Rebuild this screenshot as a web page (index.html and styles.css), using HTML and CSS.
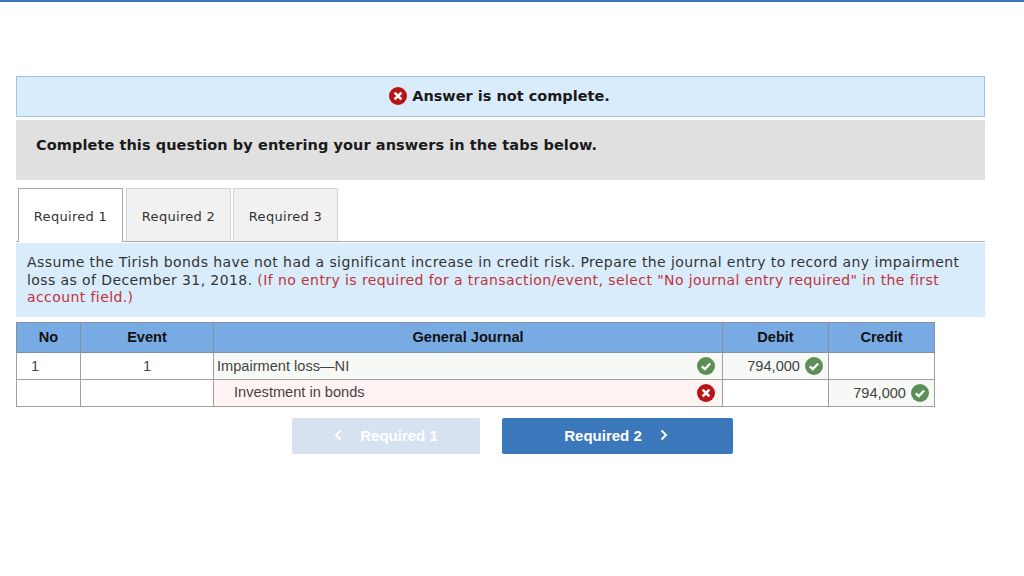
FILE: index.html
```html
<!DOCTYPE html>
<html lang="en">
<head>
    <meta charset="UTF-8">
    <title>Answer is not complete</title>
    <link rel="stylesheet" href="styles.css">
</head>
<body>

<div class="topbar"></div>

<div class="wrap">
    <div class="alert">
        <svg class="icon icon-big" viewBox="0 0 18 18"><circle cx="9" cy="9" r="9" fill="#b81414"/><path d="M5.6 5.6l6.8 6.8M12.4 5.6l-6.8 6.8" stroke="#fff" stroke-width="2.6" fill="none"/></svg>
        <span>Answer is not complete.</span>
    </div>

    <div class="prompt">Complete this question by entering your answers in the tabs below.</div>

    <!--tabs-->
    <div class="tabs">
        <span class="tab current">Required 1</span>
        <span class="tab">Required 2</span>
        <span class="tab">Required 3</span>
    </div>

    <div class="question">
        Assume the Tirish bonds have not had a significant increase in credit risk. Prepare the journal entry to record any impairment loss as of December 31, 2018. <span class="red">(If no entry is required for a transaction/event, select "No journal entry required" in the first account field.)</span>
    </div>

    <table class="journal">
        <thead>
            <tr>
                <th class="c-no">No</th>
                <th class="c-event">Event</th>
                <th class="c-account">General Journal</th>
                <th class="c-debit">Debit</th>
                <th class="c-credit">Credit</th>
            </tr>
        </thead>
        <tbody>
            <tr>
                <td class="num">1</td>
                <td class="num">1</td>
                <td class="good">
                    <div class="cell"><span>Impairment loss—NI</span>
                        <svg class="icon" viewBox="0 0 18 18"><circle cx="9" cy="9" r="9" fill="#5b8f56"/><path d="M4.8 9.3l3 2.8 5.4-5.6" stroke="#fff" stroke-width="2.3" fill="none"/></svg>
                    </div>
                </td>
                <td class="good">
                    <div class="cell cell-money"><span>794,000</span>
                        <svg class="icon" viewBox="0 0 18 18"><circle cx="9" cy="9" r="9" fill="#5b8f56"/><path d="M4.8 9.3l3 2.8 5.4-5.6" stroke="#fff" stroke-width="2.3" fill="none"/></svg>
                    </div>
                </td>
                <td></td>
            </tr>
            <tr>
                <td></td>
                <td></td>
                <td class="bad">
                    <div class="cell"><span class="indent">Investment in bonds</span>
                        <svg class="icon" viewBox="0 0 18 18"><circle cx="9" cy="9" r="9" fill="#b81414"/><path d="M5.6 5.6l6.8 6.8M12.4 5.6l-6.8 6.8" stroke="#fff" stroke-width="2.6" fill="none"/></svg>
                    </div>
                </td>
                <td></td>
                <td class="good">
                    <div class="cell cell-money"><span>794,000</span>
                        <svg class="icon" viewBox="0 0 18 18"><circle cx="9" cy="9" r="9" fill="#5b8f56"/><path d="M4.8 9.3l3 2.8 5.4-5.6" stroke="#fff" stroke-width="2.3" fill="none"/></svg>
                    </div>
                </td>
            </tr>
        </tbody>
    </table>

    <div class="nav">
        <div class="btn btn-prev">
            <svg class="chev" viewBox="0 0 8 12"><path d="M6.5 1.5L2 6l4.5 4.5" stroke="#fff" stroke-width="2" fill="none"/></svg>
            <span>Required 1</span>
        </div>
        <div class="btn btn-next">
            <span>Required 2</span>
            <svg class="chev" viewBox="0 0 8 12"><path d="M1.5 1.5L6 6l-4.5 4.5" stroke="#fff" stroke-width="2" fill="none"/></svg>
        </div>
    </div>
</div>

</body>
</html>
```

FILE: styles.css
```css
* {
    margin: 0;
    padding: 0;
    box-sizing: border-box;
}

body {
    background-color: #fff;
    font-family: "DejaVu Sans", Verdana, sans-serif;
    color: #333;
}

.topbar {
    height: 2px;
    background-color: #3b78bb;
}

.wrap {
    width: 969px;
    margin: 74px 0 0 16px;
}

.icon {
    display: block;
    width: 18px;
    height: 18px;
    flex: none;
}

.alert {
    height: 41px;
    display: flex;
    align-items: center;
    justify-content: center;
    gap: 5px;
    background-color: #d9ecfb;
    border: 1px solid #9cc5ea;
    padding: 0 2px 2px 0;
    font-size: 14.5px;
    font-weight: bold;
    color: #1a1a1a;
}

.prompt {
    height: 60px;
    margin-top: 3px;
    padding: 15px 20px 0;
    background-color: #e0e0e0;
    font-size: 14.5px;
    letter-spacing: 0.08px;
    font-weight: bold;
    line-height: 20px;
    color: #1a1a1a;
}

.tabs {
    display: flex;
    height: 54px;
    margin-top: 8px;
    padding-left: 2px;
    border-bottom: 1px solid #a8a8a8;
}

.tab {
    width: 105px;
    height: 53px;
    margin-right: 3px;
    background-color: #f1f1f1;
    border: 1px solid #d4d4d4;
    border-bottom: 0;
    text-align: center;
    line-height: 55px;
    font-size: 13px;
    letter-spacing: 0.3px;
    color: #333;
}

.tab:nth-child(2) {
    margin-right: 2px;
}

.tab.current {
    height: 54px;
    background-color: #fff;
    border-color: #a8a8a8;
}

.question {
    height: 74px;
    margin-top: 1px;
    padding: 11px 11px 0;
    background-color: #d9ecfb;
    font-size: 14px;
    letter-spacing: 0.41px;
    line-height: 17.5px;
}

.red {
    color: #c1323a;
}

.journal {
    width: 918px;
    margin-top: 5px;
    border-collapse: collapse;
    table-layout: fixed;
    font-family: "Liberation Sans", Arial, sans-serif;
    font-size: 14.6px;
}

.journal th,
.journal td {
    border: 1px solid #a0a0a0;
}

.journal th {
    height: 30px;
    padding-bottom: 2px;
    background-color: #78abe4;
    border-color: #84909c;
    color: #111;
    font-weight: bold;
}

.journal td {
    height: 27px;
    color: #444;
}

.c-no {
    width: 64px;
}

.c-event {
    width: 133px;
}

.c-account {
    width: 509px;
}

.c-debit {
    width: 106px;
}

.c-credit {
    width: 106px;
}

.num {
    text-align: center;
}

.journal td.num:first-child {
    text-align: left;
    padding-left: 14px;
}

.good {
    background-color: #f6f9f5;
}

.bad {
    background-color: #fff4f3;
}

.cell {
    display: flex;
    align-items: center;
    justify-content: space-between;
    padding: 0 7px 0 3px;
}

.cell-money {
    justify-content: flex-end;
    gap: 5px;
    padding-right: 5px;
}

.indent {
    padding: 0 0 2px 17px;
}

.nav {
    display: flex;
    gap: 22px;
    margin: 11px 0 0 276px;
}

.btn {
    height: 36px;
    display: flex;
    align-items: center;
    justify-content: center;
    gap: 18px;
    padding-bottom: 2px;
    border-radius: 2px;
    font-family: "Liberation Sans", Arial, sans-serif;
    font-size: 15px;
    font-weight: bold;
    color: #fff;
}

.btn-prev {
    width: 188px;
    background-color: #d6e2f0;
}

.btn-next {
    width: 231px;
    padding-right: 3px;
    background-color: #3b78bb;
}

.chev {
    display: block;
    width: 8px;
    height: 12px;
}
```
